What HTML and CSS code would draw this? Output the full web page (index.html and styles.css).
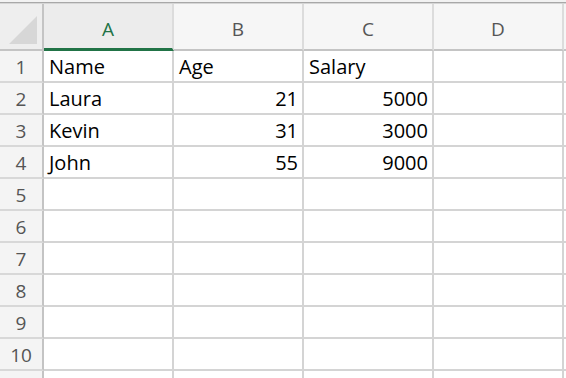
FILE: index.html
```html
<!DOCTYPE html>
<html>
<head>
<meta charset="utf-8">
<link rel="stylesheet" href="styles.css">
</head>
<body>
<div class="topbar"></div>
<div class="sheet">
  <div class="row head">
    <div class="cell corner"><span class="tri"></span></div>
    <div class="cell colh sel">A</div>
    <div class="cell colh">B</div>
    <div class="cell colh">C</div>
    <div class="cell colh">D</div>
    <div class="cell colh"></div>
  </div>
  <div class="row"><div class="cell rowh">1</div><div class="cell">Name</div><div class="cell">Age</div><div class="cell">Salary</div><div class="cell"></div><div class="cell"></div></div>
  <div class="row"><div class="cell rowh">2</div><div class="cell">Laura</div><div class="cell num">21</div><div class="cell num">5000</div><div class="cell"></div><div class="cell"></div></div>
  <div class="row"><div class="cell rowh">3</div><div class="cell">Kevin</div><div class="cell num">31</div><div class="cell num">3000</div><div class="cell"></div><div class="cell"></div></div>
  <div class="row"><div class="cell rowh">4</div><div class="cell">John</div><div class="cell num">55</div><div class="cell num">9000</div><div class="cell"></div><div class="cell"></div></div>
  <div class="row"><div class="cell rowh">5</div><div class="cell"></div><div class="cell"></div><div class="cell"></div><div class="cell"></div><div class="cell"></div></div>
  <div class="row"><div class="cell rowh">6</div><div class="cell"></div><div class="cell"></div><div class="cell"></div><div class="cell"></div><div class="cell"></div></div>
  <div class="row"><div class="cell rowh">7</div><div class="cell"></div><div class="cell"></div><div class="cell"></div><div class="cell"></div><div class="cell"></div></div>
  <div class="row"><div class="cell rowh">8</div><div class="cell"></div><div class="cell"></div><div class="cell"></div><div class="cell"></div><div class="cell"></div></div>
  <div class="row"><div class="cell rowh">9</div><div class="cell"></div><div class="cell"></div><div class="cell"></div><div class="cell"></div><div class="cell"></div></div>
  <div class="row"><div class="cell rowh">10</div><div class="cell"></div><div class="cell"></div><div class="cell"></div><div class="cell"></div><div class="cell"></div></div>
  <div class="row tail"><div class="cell rowh"></div><div class="cell"></div><div class="cell"></div><div class="cell"></div><div class="cell"></div><div class="cell"></div></div>
</div>
</body>
</html>
```
FILE: styles.css
```css
html, body {
  margin: 0;
  padding: 0;
  background: #ffffff;
  overflow: hidden;
}
body {
  width: 566px;
  height: 378px;
  font-family: "Open Sans", "Liberation Sans", sans-serif;
}
.topbar {
  height: 2px;
  background: #f2f2f2;
  border-bottom: 1px solid #a8a8a8;
  box-shadow: 0 1px 0 #d6d6d6;
  margin-bottom: 1px;
}
.row {
  display: grid;
  grid-template-columns: 44px 130px 130px 130px 130px 1fr;
  height: 32px;
}
.row.tail {
  height: 7px;
}
.cell {
  box-sizing: border-box;
  border-right: 2px solid #d4d4d4;
  border-bottom: 2px solid #d4d4d4;
  font-size: 20px;
  color: #000000;
  padding: 3px 5px 0 5px;
  line-height: 26px;
  white-space: nowrap;
  overflow: hidden;
}
.tail .cell {
  border-bottom: 0;
}
.num {
  text-align: right;
  padding-right: 4px;
}
.head {
  height: 47px;
}
.head .cell {
  background: #f6f6f6;
  border-right-color: #dcdcdc;
  border-bottom-color: #c4c4c4;
  color: #555555;
  text-align: center;
  font-size: 19px;
  padding-top: 12px;
}
.head .sel {
  background: #ececec;
  color: #217346;
  border-bottom: 3px solid #217346;
}
.corner {
  position: relative;
}
.head .corner {
  background: #eeeeee;
  border-right-color: #c4c4c4;
}
.tri {
  position: absolute;
  right: 5px;
  bottom: 5px;
  width: 0;
  height: 0;
  border-style: solid;
  border-width: 0 0 28px 28px;
  border-color: transparent transparent #d7d7d7 transparent;
}
.rowh {
  background: #f4f4f4;
  border-right-color: #c4c4c4;
  border-bottom-color: #d8d8d8;
  color: #555555;
  text-align: center;
  padding-left: 0;
  padding-right: 0;
  font-size: 19px;
}
```
